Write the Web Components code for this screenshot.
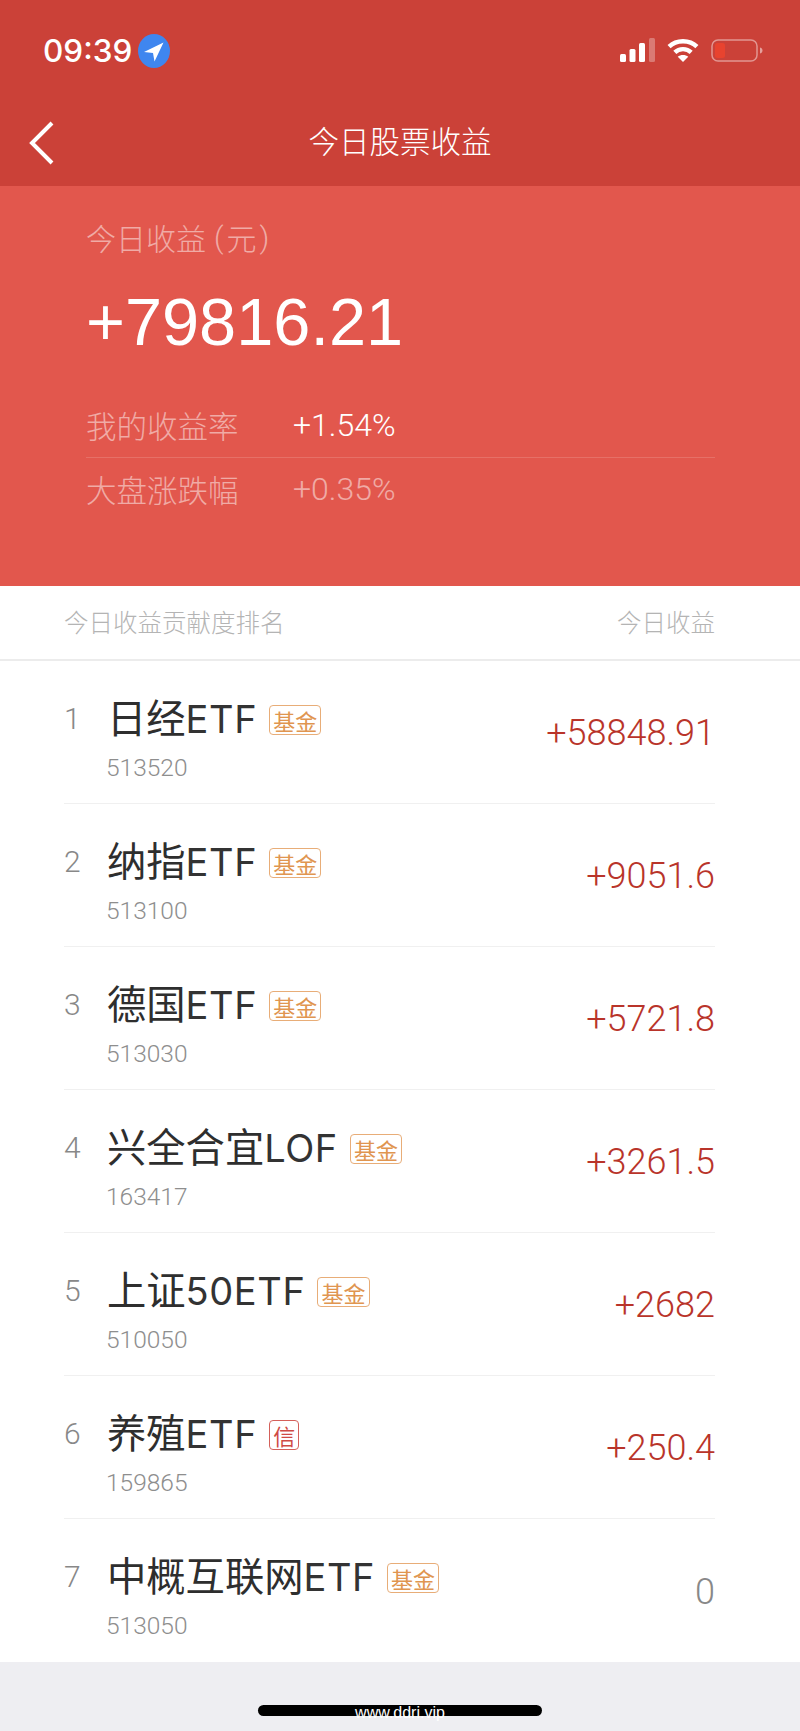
<!DOCTYPE html>
<html lang="zh-CN">
<head>
<meta charset="utf-8">
<title>今日股票收益</title>
<style>
  html, body { margin: 0; padding: 0; background: #eeeef2; }
  body { width: 800px; height: 1731px; overflow: hidden; font-family: "Liberation Sans", "Noto Sans CJK SC", sans-serif; }
</style>
</head>
<body>
<top-bar title="今日股票收益"></top-bar>
<earnings-hero></earnings-hero>
<rank-list>
  <rank-row rank="1" name="日经ETF" tag="基金" code="513520" amount="+58848.91"></rank-row>
  <rank-row rank="2" name="纳指ETF" tag="基金" code="513100" amount="+9051.6"></rank-row>
  <rank-row rank="3" name="德国ETF" tag="基金" code="513030" amount="+5721.8"></rank-row>
  <rank-row rank="4" name="兴全合宜LOF" tag="基金" code="163417" amount="+3261.5"></rank-row>
  <rank-row rank="5" name="上证50ETF" tag="基金" code="510050" amount="+2682"></rank-row>
  <rank-row rank="6" name="养殖ETF" tag="信" tone="red" code="159865" amount="+250.4"></rank-row>
  <rank-row rank="7" name="中概互联网ETF" tag="基金" code="513050" amount="0" tone-amount="flat" last></rank-row>
</rank-list>
<home-bar></home-bar>

<script>
const CJK = '"Noto Sans CJK SC", sans-serif';
const NUM = 'Roboto, "Liberation Sans", sans-serif';

class TopBar extends HTMLElement {
  connectedCallback() {
    this.attachShadow({mode: 'open'}).innerHTML = `
      <style>
        :host { display: block; height: 186px; background: #cb4138; color: #fff; font-family: ${CJK}; }
        .status { height: 100px; padding: 0 37px 0 43px; box-sizing: border-box; display: flex; align-items: center; justify-content: space-between; }
        .left { display: flex; align-items: center; gap: 6px; padding-top: 1px; }
        .time { font: 500 31.5px Inter, sans-serif; }
        .right { display: flex; align-items: center; gap: 11px; }
        svg { display: block; }
        .nav { height: 86px; display: flex; align-items: center; justify-content: center; position: relative; }
        .nav h1 { margin: 0 0 6px; font-size: 30.500px; line-height: 40px; font-weight: 300; }
        .back { position: absolute; left: 28px; top: 21px; }
      </style>
      <div class="status">
        <div class="left">
          <span class="time">09:39</span>
          <svg width="32" height="34" viewBox="0 0 32 34">
            <ellipse cx="16" cy="17" rx="16" ry="17" fill="#3f86ef"/>
            <path d="M25.500 8.500 L6 18 L15 19 L16.500 27.500 Z" fill="#fff"/>
          </svg>
        </div>
        <div class="right">
          <svg width="35" height="24" viewBox="0 0 35 24">
            <rect x="0" y="16" width="6" height="8" rx="1.500" fill="#fff"/>
            <rect x="9.500" y="11" width="6" height="13" rx="1.500" fill="#fff"/>
            <rect x="19" y="5" width="6" height="19" rx="1.500" fill="#fff"/>
            <rect x="29" y="0" width="6" height="24" rx="1.500" fill="#fff" opacity=".3"/>
          </svg>
          <svg width="34" height="24" viewBox="0 0 34 25" fill="none" stroke="#fff" stroke-width="4.500">
            <path d="M2.500 9 C10 1.500 24 1.500 31.500 9"/>
            <path d="M8.500 15 C13 10.500 21 10.500 25.500 15"/>
            <path d="M17 25 L11.500 19.500 C14.500 17 19.500 17 22.500 19.500 Z" fill="#fff" stroke="none"/>
          </svg>
          <svg width="52" height="23" viewBox="0 0 52 23">
            <rect x="1" y="1" width="45" height="21" rx="6" fill="none" stroke="#fff" stroke-opacity=".45" stroke-width="1.500"/>
            <rect x="4" y="4" width="10" height="15" rx="2.500" fill="#e8432f"/>
            <path d="M49 8.500 C51 9 51.500 10.500 51.500 11.500 C51.500 12.500 51 14 49 14.500 Z" fill="#fff" fill-opacity=".5"/>
          </svg>
        </div>
      </div>
      <div class="nav">
        <svg class="back" width="28" height="44" viewBox="0 0 28 44" fill="none" stroke="#fff" stroke-width="4">
          <path d="M24 2 L4 22 L24 42"/>
        </svg>
        <h1>${this.getAttribute('title')}</h1>
      </div>`;
  }
}
customElements.define('top-bar', TopBar);

class EarningsHero extends HTMLElement {
  connectedCallback() {
    this.attachShadow({mode: 'open'}).innerHTML = `
      <style>
        :host { display: block; height: 400px; box-sizing: border-box; padding: 30px 85px 0 86px; background: #e2574d; color: #fff; font-family: ${CJK}; }
        .label { display: flex; align-items: center; font-size: 30px; font-weight: 300; line-height: 42px; color: rgba(255,255,255,.5); }
        .label i { font: 300 30px ${NUM}; }
        .label .open { margin: 0 3px 0 8px; }
        .label .close { margin-left: 3px; }
        .total { font: 400 66.700px/76px "Liberation Sans", sans-serif; margin-top: 26px; }
        .rows { margin-top: 32px; }
        .row { height: 65px; display: flex; align-items: center; font-size: 30.500px; font-weight: 300; }
        .row + .row { height: 62px; border-top: 1px solid rgba(255,255,255,.15); }
        .row span:first-child { width: 207px; color: rgba(255,255,255,.5); }
        .row span:last-child { font: 300 32px ${NUM}; }
        .row.dim span:last-child { color: rgba(255,255,255,.5); }
      </style>
      <div class="label"><span>今日收益</span><i class="open">(</i><span>元</span><i class="close">)</i></div>
      <div class="total">+79816.21</div>
      <div class="rows">
        <div class="row"><span>我的收益率</span><span>+1.54%</span></div>
        <div class="row dim"><span>大盘涨跌幅</span><span>+0.35%</span></div>
      </div>`;
  }
}
customElements.define('earnings-hero', EarningsHero);

class RankList extends HTMLElement {
  connectedCallback() {
    this.attachShadow({mode: 'open'}).innerHTML = `
      <style>
        :host { display: block; background: #fff; font-family: ${CJK}; }
        header { height: 73px; padding: 0 85px 0 64px; display: flex; align-items: center; justify-content: space-between; font-size: 24.500px; font-weight: 300; color: #b4b4b4; border-bottom: 2px solid #ececec; }
        header span { margin-bottom: 3px; }
      </style>
      <header><span>今日收益贡献度排名</span><span>今日收益</span></header>
      <slot></slot>`;
  }
}
customElements.define('rank-list', RankList);

class RankRow extends HTMLElement {
  connectedCallback() {
    const a = n => this.getAttribute(n);
    const red = a('tone') === 'red';
    const flat = a('tone-amount') === 'flat';
    // latin part of the name is set apart, it is thinner than the CJK part
    const name = a('name').replace(/[A-Z0-9]+/g, m => `<span class="lat">${m}</span>`);
    this.attachShadow({mode: 'open'}).innerHTML = `
      <style>
        :host { display: block; padding: 0 85px 0 64px; font-family: ${CJK}; }
        .row { height: 143px; box-sizing: border-box; display: flex; align-items: center; border-bottom: ${this.hasAttribute('last') ? '0' : '1px solid #f0f0f0'}; }
        .rank { width: 43px; font: 300 30px/34px ${NUM}; color: #888; align-self: flex-start; margin-top: 41px; }
        .main { flex: 1; align-self: flex-start; margin-top: 35px; }
        .title { display: flex; align-items: center; gap: 12px; height: 48px; color: #2e2e2e; }
        .name { font-size: 39.300px; line-height: 48px; margin-top: -5px; }
        .lat { font: 400 38px/48px Inter, sans-serif; letter-spacing: .6px; color: #333; }
        .tag { box-sizing: border-box; height: 30px; width: fit-content; padding: 0 3px; display: flex; align-items: center; border: 1px solid ${red ? '#d4605a' : '#e8ad78'}; border-radius: 4px; font-size: 22px; line-height: 1; color: ${red ? '#cf4a44' : '#e09550'}; }
        .code { margin-top: 9px; margin-left: -1px; font: 300 24.500px/30px ${NUM}; color: #8e8e8e; }
        .amount { font: 300 36px/44px ${NUM}; margin-top: 2px; color: ${flat ? '#888' : '#b9342a'}; }
      </style>
      <div class="row">
        <span class="rank">${a('rank')}</span>
        <div class="main">
          <div class="title"><span class="name">${name}</span><span class="tag">${a('tag')}</span></div>
          <div class="code">${a('code')}</div>
        </div>
        <span class="amount">${a('amount')}</span>
      </div>`;
  }
}
customElements.define('rank-row', RankRow);

class HomeBar extends HTMLElement {
  connectedCallback() {
    this.attachShadow({mode: 'open'}).innerHTML = `
      <style>
        :host { display: block; height: 70px; background: #eeeef2; padding-top: 43px; box-sizing: border-box; }
        .bar { width: 284px; height: 11px; margin: 0 auto; border-radius: 6px; background: #000; color: #fff; display: flex; justify-content: center; font: 16px/16px "Liberation Sans", sans-serif; }
      </style>
      <div class="bar"><span>www.ddri.vip</span></div>`;
  }
}
customElements.define('home-bar', HomeBar);
</script>
</body>
</html>
